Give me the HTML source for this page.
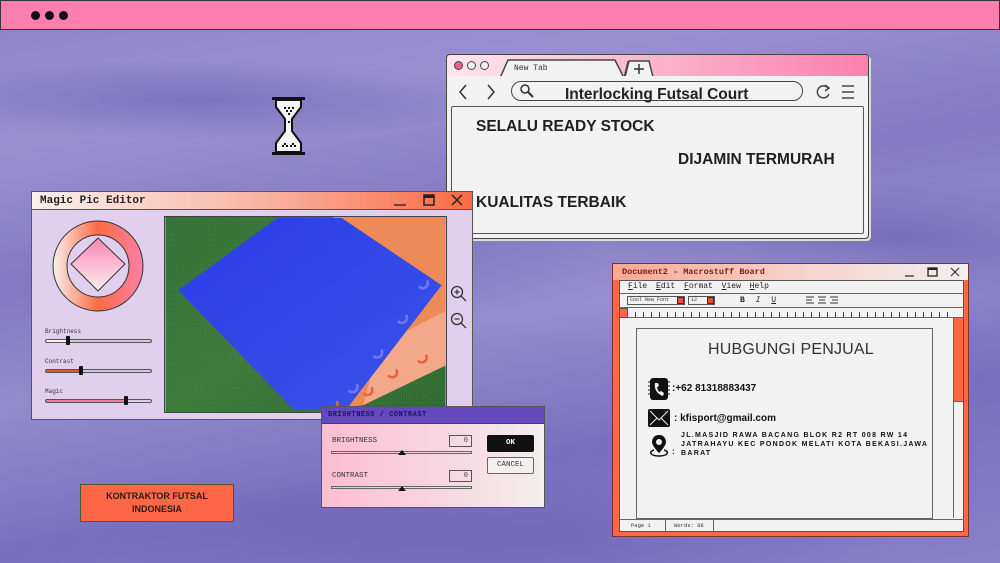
<!DOCTYPE html>
<html><head><meta charset="utf-8"><style>
*{box-sizing:border-box;margin:0;padding:0}
body{width:1000px;height:563px;overflow:hidden;position:relative;font-family:"Liberation Sans",sans-serif;
background:linear-gradient(170deg,#8d82c8 0%,#9a90d0 20%,#8479c2 40%,#948bcc 55%,#7a6fbd 75%,#8a80c6 100%)}
.abs{position:absolute}
.mono{font-family:"Liberation Mono",monospace}
.bold{font-weight:bold}
</style></head><body>
<div class="abs" style="left:0;top:40px;width:1000px;height:523px;background:
radial-gradient(ellipse 300px 40px at 200px 60px,rgba(90,80,170,.45),transparent),
radial-gradient(ellipse 400px 60px at 700px 250px,rgba(160,150,215,.4),transparent),
radial-gradient(ellipse 350px 50px at 300px 230px,rgba(100,90,180,.35),transparent),
radial-gradient(ellipse 300px 60px at 900px 200px,rgba(80,70,160,.4),transparent),
radial-gradient(ellipse 400px 70px at 500px 500px,rgba(90,80,170,.35),transparent)"></div>

<div class="abs" style="left:0;top:0;width:1000px;height:30px;background:#fd7faf;border:1px solid #333"></div>
<div class="abs" style="left:31px;top:11px;width:9px;height:9px;border-radius:50%;background:#111"></div>
<div class="abs" style="left:45px;top:11px;width:9px;height:9px;border-radius:50%;background:#111"></div>
<div class="abs" style="left:59px;top:11px;width:9px;height:9px;border-radius:50%;background:#111"></div>

<svg class="abs" style="left:272px;top:97px" width="34" height="58" viewBox="0 0 34 58">
<rect x="0" y="0" width="33" height="3" fill="#111"/><rect x="0" y="55" width="33" height="3" fill="#111"/>
<path d="M4 3 H29 V10 L20 22 V34 L29 46 V55 H4 V46 L13 34 V22 L4 10 Z" fill="#f4f4f4" stroke="#111" stroke-width="2"/>
<path d="M12 10h2v2h-2zM16 10h2v2h-2zM20 10h2v2h-2zM14 13h2v2h-2zM18 13h2v2h-2zM16 16h2v2h-2zM16 24h2v2h-2zM10 48h2v2h-2zM14 48h2v2h-2zM18 48h2v2h-2zM22 48h2v2h-2zM12 46h2v2h-2zM20 46h2v2h-2z" fill="#111"/>
</svg>

<div class="abs" style="left:446px;top:54px;width:423px;height:185px;background:#f2f2f2;border:1.5px solid #444;border-radius:4px;box-shadow:2px 2px 0 #ddd"></div>
<div class="abs" style="left:447px;top:55px;width:421px;height:22px;background:linear-gradient(90deg,#fde6ee,#fbb4cc 50%,#fd7faf);border-bottom:1.5px solid #555;border-radius:4px 4px 0 0"></div>
<div class="abs" style="left:454px;top:61px;width:9px;height:9px;border-radius:50%;background:#f06090;border:1px solid #444"></div>
<div class="abs" style="left:467px;top:61px;width:9px;height:9px;border-radius:50%;background:#f2f2f2;border:1px solid #444"></div>
<div class="abs" style="left:480px;top:61px;width:9px;height:9px;border-radius:50%;background:#f2f2f2;border:1px solid #444"></div>
<svg class="abs" style="left:500px;top:58px" width="140" height="21"><path d="M0 20 L8 2 H115 L124 20" fill="#f2f2f2" stroke="#444" stroke-width="1.5"/><path d="M124 20 L128 4 H143" fill="#f2f2f2" stroke="#444" stroke-width="1.5"/></svg>
<div class="abs mono" style="left:514px;top:64px;font-size:8px;color:#333">New Tab</div>
<svg class="abs" style="left:624px;top:59px" width="30" height="19"><path d="M1 18 L5 2 H25 L29 18" fill="#f2f2f2" stroke="#444" stroke-width="1.5"/><path d="M10 10h10M15 5v10" stroke="#333" stroke-width="1.5"/></svg>
<div class="abs" style="left:447px;top:76px;width:421px;height:2px;background:#f2f2f2"></div>
<svg class="abs" style="left:456px;top:82px" width="48" height="20"><path d="M10 3 L4 10 L10 17M32 3 L38 10 L32 17" fill="none" stroke="#333" stroke-width="1.5"/></svg>
<div class="abs" style="left:511px;top:81px;width:292px;height:20px;border:1.5px solid #444;border-radius:10px"></div>
<svg class="abs" style="left:519px;top:83px" width="16" height="16"><circle cx="6" cy="6" r="4" fill="none" stroke="#333" stroke-width="1.5"/><path d="M9 9 L14 14" stroke="#333" stroke-width="2"/></svg>
<div class="abs bold" style="left:565px;top:86px;font-size:15.5px;color:#222">Interlocking Futsal Court</div>
<svg class="abs" style="left:812px;top:82px" width="45" height="20"><path d="M16 6 A6 6 0 1 0 17 12" fill="none" stroke="#444" stroke-width="1.5"/><path d="M13 3 L17 6 L13 9" fill="none" stroke="#444" stroke-width="1.5"/><path d="M30 4h12M30 10h12M30 16h12" stroke="#444" stroke-width="1.5"/></svg>
<div class="abs" style="left:451px;top:106px;width:413px;height:128px;border:1.5px solid #555;border-radius:2px"></div>
<div class="abs bold" style="left:476px;top:118px;font-size:15.5px;color:#1f1f1f">SELALU READY STOCK</div>
<div class="abs bold" style="left:678px;top:151px;font-size:15.5px;color:#1f1f1f">DIJAMIN TERMURAH</div>
<div class="abs bold" style="left:476px;top:194px;font-size:15.5px;color:#1f1f1f">KUALITAS TERBAIK</div>

<div class="abs" style="left:31px;top:191px;width:442px;height:229px;background:#e0d0ee;border:1.5px solid #555"></div>
<div class="abs" style="left:32px;top:192px;width:440px;height:18px;background:linear-gradient(90deg,#fcf0ec,#f7b7a6 50%,#fc6a44);border-bottom:1.5px solid #555"></div>
<div class="abs mono bold" style="left:40px;top:195px;font-size:11px;color:#222">Magic Pic Editor</div>
<svg class="abs" style="left:388px;top:193px" width="84" height="16"><path d="M6 12h12" stroke="#333" stroke-width="1.5"/><rect x="36" y="2" width="10" height="10" fill="none" stroke="#222" stroke-width="1.5"/><rect x="36" y="2" width="10" height="3" fill="#222"/><path d="M64 2l10 10M74 2l-10 10" stroke="#222" stroke-width="1.5"/></svg>
<svg class="abs" style="left:50px;top:218px" width="100" height="100">
<defs><linearGradient id="rg" x1="0" x2="1"><stop offset="0" stop-color="#f8f0ec"/><stop offset=".5" stop-color="#fd6a44"/><stop offset="1" stop-color="#fd7fa8"/></linearGradient>
<linearGradient id="dg" x1="0" y1="0" x2="0" y2="1"><stop offset="0" stop-color="#fd84b4"/><stop offset="1" stop-color="#f8f0f0"/></linearGradient></defs>
<circle cx="48" cy="48" r="45" fill="url(#rg)" stroke="#333" stroke-width="1"/>
<circle cx="48" cy="48" r="31" fill="#e0d0ee" stroke="#333" stroke-width="1"/>
<path d="M48 20 L75 46 L48 73 L21 46 Z" fill="url(#dg)" stroke="#333" stroke-width="1"/>
</svg>
<div class="abs mono" style="left:45px;top:328px;font-size:6px;color:#333">Brightness</div>
<div class="abs" style="left:45px;top:339px;width:107px;height:4px;border:1px solid #555;border-radius:2px;background:linear-gradient(90deg,#f4f0f0 22%,#cfc6d8 22%)"></div>
<div class="abs" style="left:66px;top:336px;width:4px;height:9px;background:#111;border-radius:1px"></div>
<div class="abs mono" style="left:45px;top:358px;font-size:6px;color:#333">Contrast</div>
<div class="abs" style="left:45px;top:369px;width:107px;height:4px;border:1px solid #555;border-radius:2px;background:linear-gradient(90deg,#e8502e 33%,#cfc6d8 33%)"></div>
<div class="abs" style="left:79px;top:366px;width:4px;height:9px;background:#111;border-radius:1px"></div>
<div class="abs mono" style="left:45px;top:388px;font-size:6px;color:#333">Magic</div>
<div class="abs" style="left:45px;top:399px;width:107px;height:4px;border:1px solid #555;border-radius:2px;background:linear-gradient(90deg,#f07aa0 75%,#d8d0dc 75%)"></div>
<div class="abs" style="left:124px;top:396px;width:4px;height:9px;background:#111;border-radius:1px"></div>
<svg class="abs" style="left:164px;top:216px;border:1px solid #444" width="283" height="197" viewBox="0 0 283 197">
<defs><linearGradient id="gg" x1="0" y1="0" x2="1" y2="1"><stop offset="0" stop-color="#2f6e34"/><stop offset=".5" stop-color="#3a7a3a"/><stop offset="1" stop-color="#2a6430"/></linearGradient>
<pattern id="gr" width="5" height="5" patternUnits="userSpaceOnUse"><path d="M0 5 L2 0 M3 5 L4 1" stroke="#4a8a44" stroke-width=".8" opacity=".6"/></pattern>
<linearGradient id="bl" x1="0" y1="0" x2="1" y2="1"><stop offset="0" stop-color="#2b3ee6"/><stop offset="1" stop-color="#3a52ea"/></linearGradient></defs>
<rect width="283" height="197" fill="url(#gg)"/>
<rect width="283" height="197" fill="url(#gr)"/>
<path d="M170 0 H283 V150 L235 172 L200 190 L150 197 L183 194 Z" fill="#ee8a58"/>
<path d="M215 130 L283 95 V150 L200 190 Z" fill="#f3a88a"/>
<path d="M113 1 H178 L279 69 L183 194 L129 194 L13 74 Z" fill="url(#bl)"/>
<g fill="none" stroke="#7078f0" stroke-width="2.5"><path d="M256 70 a5 5 0 0 0 8 -6"/><path d="M235 105 a5 5 0 0 0 8 -6"/><path d="M210 140 a5 5 0 0 0 8 -6"/><path d="M185 175 a5 5 0 0 0 8 -6"/></g>
<g fill="none" stroke="#e86040" stroke-width="2.5"><path d="M200 178 a5 5 0 0 0 8 -6"/><path d="M225 160 a5 5 0 0 0 8 -6"/><path d="M255 145 a5 5 0 0 0 8 -6"/><path d="M165 192 a5 5 0 0 0 8 -6"/></g>
</svg>
<svg class="abs" style="left:449px;top:284px" width="20" height="46"><circle cx="8" cy="8" r="5.5" fill="none" stroke="#333" stroke-width="1.3"/><path d="M12 12l5 5M5.5 8h5M8 5.5v5" stroke="#333" stroke-width="1.3"/><circle cx="8" cy="35" r="5.5" fill="none" stroke="#333" stroke-width="1.3"/><path d="M12 39l5 5M5.5 35h5" stroke="#333" stroke-width="1.3"/></svg>

<div class="abs" style="left:321px;top:406px;width:224px;height:102px;background:linear-gradient(90deg,#fdbcd2,#f2eeee);border:1.5px solid #555"></div>
<div class="abs" style="left:322px;top:407px;width:222px;height:17px;background:#6448c0;border-bottom:1px solid #444"></div>
<div class="abs mono bold" style="left:328px;top:411px;font-size:7px;color:#1a1a3a;letter-spacing:.5px">BRIGHTNESS / CONTRAST</div>
<div class="abs mono" style="left:332px;top:437px;font-size:7.5px;color:#333">BRIGHTNESS</div>
<div class="abs" style="left:449px;top:435px;width:23px;height:12px;border:1px solid #555;font:7px 'Liberation Mono';color:#444;text-align:right;padding:1px 3px">0</div>
<div class="abs" style="left:331px;top:451px;width:141px;height:3px;border:1px solid #666"></div>
<div class="abs" style="left:398px;top:450px;width:0;height:0;border-left:4px solid transparent;border-right:4px solid transparent;border-bottom:5px solid #111"></div>
<div class="abs mono" style="left:332px;top:472px;font-size:7.5px;color:#333">CONTRAST</div>
<div class="abs" style="left:449px;top:470px;width:23px;height:12px;border:1px solid #555;font:7px 'Liberation Mono';color:#444;text-align:right;padding:1px 3px">0</div>
<div class="abs" style="left:331px;top:486px;width:141px;height:3px;border:1px solid #666"></div>
<div class="abs" style="left:398px;top:486px;width:0;height:0;border-left:4px solid transparent;border-right:4px solid transparent;border-bottom:5px solid #111"></div>
<div class="abs mono bold" style="left:487px;top:435px;width:47px;height:17px;background:#111;color:#fff;font-size:7.5px;text-align:center;line-height:17px;border-radius:2px">OK</div>
<div class="abs mono" style="left:487px;top:457px;width:47px;height:17px;background:#f4f0f0;border:1px solid #666;color:#333;font-size:7.5px;text-align:center;line-height:15px;border-radius:2px">CANCEL</div>

<div class="abs bold" style="left:80px;top:484px;width:154px;height:38px;background:#fd6745;border:1.5px solid #553;color:#2a1a1a;font-size:9px;text-align:center;line-height:13px;padding-top:5px">KONTRAKTOR FUTSAL<br>INDONESIA</div>

<div class="abs" style="left:612px;top:263px;width:357px;height:274px;background:#fd6745;border:1px solid #733"></div>
<div class="abs" style="left:613px;top:264px;width:355px;height:16px;background:linear-gradient(90deg,#f9a890,#f8d0c8 50%,#f3eeee)"></div>
<div class="abs mono bold" style="left:622px;top:267px;font-size:8.5px;color:#7a1d1a">Document2 - Macrostuff Board</div>
<svg class="abs" style="left:900px;top:265px" width="66" height="14"><path d="M5 11h9" stroke="#333" stroke-width="1.3"/><rect x="28" y="3" width="9" height="8" fill="none" stroke="#222" stroke-width="1.3"/><rect x="28" y="3" width="9" height="2" fill="#222"/><path d="M51 3l8 8M59 3l-8 8" stroke="#333" stroke-width="1.2"/></svg>
<div class="abs" style="left:619px;top:280px;width:345px;height:252px;background:#f2f2f2;border:1px solid #555"></div>
<div class="abs" style="left:619px;top:280px;width:345px;height:14px;border-bottom:1px solid #666"></div>
<div class="abs mono" style="left:628px;top:282px;font-size:8px;color:#222;word-spacing:4px"><u>F</u>ile <u>E</u>dit <u>F</u>ormat <u>V</u>iew <u>H</u>elp</div>
<div class="abs" style="left:619px;top:294px;width:345px;height:14px;border-bottom:1px solid #666"></div>
<div class="abs mono" style="left:627px;top:296px;width:58px;height:9px;border:1px solid #555;font-size:5px;line-height:7px;padding-left:2px;color:#333">Cool New Font</div>
<div class="abs" style="left:677px;top:297px;width:7px;height:7px;background:#e8502e;border:1px solid #333"></div>
<div class="abs mono" style="left:688px;top:296px;width:27px;height:9px;border:1px solid #555;font-size:5px;line-height:7px;padding-left:2px;color:#333">12</div>
<div class="abs" style="left:707px;top:297px;width:7px;height:7px;background:#e8502e;border:1px solid #333"></div>
<div class="abs mono" style="left:740px;top:296px;font-size:8px;color:#222;word-spacing:6px"><b>B</b> <i>I</i> <u>U</u></div>
<svg class="abs" style="left:806px;top:296px" width="40" height="10"><path d="M0 1h8M0 4h6M0 7h8M12 1h8M13 4h6M12 7h8M24 1h8M26 4h6M24 7h8" stroke="#333" stroke-width="1"/></svg>
<div class="abs" style="left:619px;top:308px;width:345px;height:10px;border-bottom:1px solid #666"></div>
<div class="abs" style="left:619px;top:308px;width:9px;height:10px;background:#fd6745;border:1px solid #555"></div>
<div class="abs" style="left:635px;top:312px;width:320px;height:5px;background:repeating-linear-gradient(90deg,#444 0 1px,transparent 1px 8px)"></div>
<div class="abs" style="left:953px;top:318px;width:10px;height:200px;border-left:1px solid #666"></div>
<div class="abs" style="left:954px;top:318px;width:9px;height:84px;background:#fd6745;border-bottom:1px solid #666"></div>
<div class="abs" style="left:636px;top:328px;width:297px;height:191px;border:1px solid #666;background:#f2f2f2"></div>
<div class="abs" style="left:708px;top:341px;font-size:16px;color:#333;letter-spacing:.2px">HUBGUNGI PENJUAL</div>
<svg class="abs" style="left:647px;top:377px" width="24" height="24"><rect x="3" y="1" width="18" height="22" rx="3" fill="#111"/><path d="M8 6 C7 12 10 17 16 19 L17 16 L14 14 L12 15 C11 13 10 11 10 10 L12 9 L11 6 Z" fill="#f2f2f2"/><path d="M1 5h3M1 9h3M1 13h3M1 17h3M20 5h3M20 9h3M20 13h3M20 17h3" stroke="#111"/></svg>
<div class="abs bold" style="left:672px;top:383px;font-size:10px;color:#111">:+62 81318883437</div>
<svg class="abs" style="left:647px;top:408px" width="24" height="20"><rect x="1" y="1" width="22" height="18" rx="2" fill="#111"/><path d="M3 3 L12 12 L21 3M3 17 L10 10M21 17 L14 10" stroke="#f2f2f2" stroke-width="1" fill="none"/></svg>
<div class="abs bold" style="left:674px;top:413px;font-size:10px;color:#111">: kfisport@gmail.com</div>
<svg class="abs" style="left:648px;top:434px" width="22" height="24"><path d="M11 1 C6 1 4 5 4 8 C4 12 11 19 11 19 C11 19 18 12 18 8 C18 5 16 1 11 1 Z" fill="#111"/><circle cx="11" cy="8" r="3" fill="#f2f2f2"/><path d="M6 16 C1 17 1 22 11 22 C21 22 21 17 16 16" fill="none" stroke="#111" stroke-width="1.5"/></svg>
<div class="abs bold" style="left:672px;top:447px;font-size:8px;color:#111">:</div>
<div class="abs bold" style="left:681px;top:431px;font-size:7px;line-height:9px;color:#111;letter-spacing:1.3px;white-space:nowrap">JL.MASJID RAWA BACANG BLOK R2 RT 008 RW 14<br>JATRAHAYU KEC PONDOK MELATI KOTA BEKASI.JAWA<br>BARAT</div>
<div class="abs" style="left:619px;top:519px;width:345px;height:13px;border-top:1px solid #666"></div>
<div class="abs" style="left:619px;top:519px;width:47px;height:13px;border-right:1px solid #666;font:5.5px 'Liberation Mono';color:#333;padding:3px 0 0 12px">Page 1</div>
<div class="abs" style="left:666px;top:519px;width:48px;height:13px;border-right:1px solid #666;font:5.5px 'Liberation Mono';color:#333;padding:3px 0 0 8px">Words: 88</div>
</body></html>
